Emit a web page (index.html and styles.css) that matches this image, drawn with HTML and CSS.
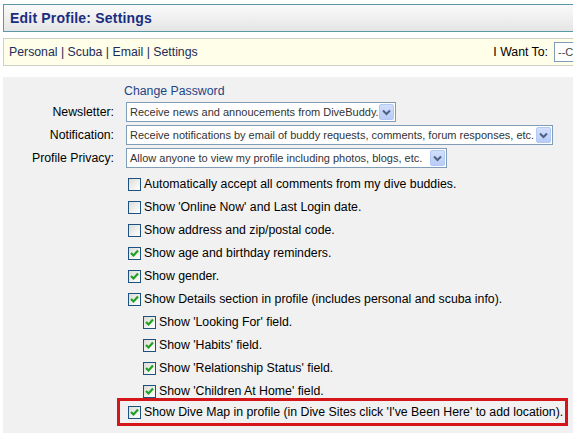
FILE: index.html
```html
<!DOCTYPE html>
<html lang="en">
<head>
  <meta charset="UTF-8" />
  <title>Edit Profile: Settings</title>
  <link rel="stylesheet" href="styles.css">
</head>
<body>

  <div class="page">
    <div class="header">
      <h1>Edit Profile: Settings</h1>
    </div>

    <div class="tabs">
      <div class="tab-links">
        <a href="#">Personal</a> | <a href="#">Scuba</a> | <a href="#">Email</a> | <a href="#">Settings</a>
      </div>
      <div class="want">
        <span>I Want To:</span>
        <div class="select want-select">--Choose--</div>
      </div>
    </div>

    <div class="content">
      <div class="form">
        <span></span>
        <a href="#" class="change">Change Password</a>

        <label class="label">Newsletter:</label>
        <div class="select sel-news">
          <span>Receive news and annoucements from DiveBuddy.</span>
          <span class="arrow"><svg width="9" height="7" viewBox="0 0 9 7"><path d="M1 1.5 L4.5 5 L8 1.5" fill="none" stroke="#4d6185" stroke-width="2"/></svg></span>
        </div>

        <label class="label">Notification:</label>
        <div class="select sel-notify">
          <span>Receive notifications by email of buddy requests, comments, forum responses, etc.</span>
          <span class="arrow"><svg width="9" height="7" viewBox="0 0 9 7"><path d="M1 1.5 L4.5 5 L8 1.5" fill="none" stroke="#4d6185" stroke-width="2"/></svg></span>
        </div>

        <label class="label">Profile Privacy:</label>
        <div class="select sel-privacy">
          <span>Allow anyone to view my profile including photos, blogs, etc.</span>
          <span class="arrow"><svg width="9" height="7" viewBox="0 0 9 7"><path d="M1 1.5 L4.5 5 L8 1.5" fill="none" stroke="#4d6185" stroke-width="2"/></svg></span>
        </div>
      </div>

      <ul class="checks">
        <li class="check"><span class="box"></span>Automatically accept all comments from my dive buddies.</li>
        <li class="check"><span class="box"></span>Show 'Online Now' and Last Login date.</li>
        <li class="check"><span class="box"></span>Show address and zip/postal code.</li>
        <li class="check on"><span class="box"><svg width="11" height="11" viewBox="0 0 11 11"><path d="M2 5 L4.5 7.5 L9 2.5" fill="none" stroke="#21a121" stroke-width="2.2"/></svg></span>Show age and birthday reminders.</li>
        <li class="check on"><span class="box"><svg width="11" height="11" viewBox="0 0 11 11"><path d="M2 5 L4.5 7.5 L9 2.5" fill="none" stroke="#21a121" stroke-width="2.2"/></svg></span>Show gender.</li>
        <li class="check on"><span class="box"><svg width="11" height="11" viewBox="0 0 11 11"><path d="M2 5 L4.5 7.5 L9 2.5" fill="none" stroke="#21a121" stroke-width="2.2"/></svg></span>Show Details section in profile (includes personal and scuba info).</li>
        <li class="check on sub"><span class="box"><svg width="11" height="11" viewBox="0 0 11 11"><path d="M2 5 L4.5 7.5 L9 2.5" fill="none" stroke="#21a121" stroke-width="2.2"/></svg></span>Show 'Looking For' field.</li>
        <li class="check on sub"><span class="box"><svg width="11" height="11" viewBox="0 0 11 11"><path d="M2 5 L4.5 7.5 L9 2.5" fill="none" stroke="#21a121" stroke-width="2.2"/></svg></span>Show 'Habits' field.</li>
        <li class="check on sub"><span class="box"><svg width="11" height="11" viewBox="0 0 11 11"><path d="M2 5 L4.5 7.5 L9 2.5" fill="none" stroke="#21a121" stroke-width="2.2"/></svg></span>Show 'Relationship Status' field.</li>
        <li class="check on sub"><span class="box"><svg width="11" height="11" viewBox="0 0 11 11"><path d="M2 5 L4.5 7.5 L9 2.5" fill="none" stroke="#21a121" stroke-width="2.2"/></svg></span>Show 'Children At Home' field.</li>
        <li class="check on highlight"><span class="box"><svg width="11" height="11" viewBox="0 0 11 11"><path d="M2 5 L4.5 7.5 L9 2.5" fill="none" stroke="#21a121" stroke-width="2.2"/></svg></span>Show Dive Map in profile (in Dive Sites click 'I've Been Here' to add location).</li>
      </ul>
    </div>
  </div>

</body>
</html>
```

FILE: styles.css
```css
body {
  margin: 0;
  font-family: "Liberation Sans", Arial, sans-serif;
  font-size: 12.3px;
  color: #000;
  background: #fff;
  overflow: hidden;
}

.page {
  width: 640px;
  padding-left: 3px;
  box-sizing: border-box;
}

.header {
  margin-top: 4px;
  height: 28px;
  box-sizing: border-box;
  border: 1px solid #5b98a5;
  background: linear-gradient(#fafafa, #e5e5e5);
  display: flex;
  align-items: center;
  padding-left: 6px;
}

h1 {
  margin: 0;
  font-size: 14px;
  font-weight: bold;
  color: #1b2d80;
  letter-spacing: 0.2px;
}

.tabs {
  margin-top: 6px;
  height: 28px;
  box-sizing: border-box;
  border: 1px solid #cfcfc4;
  background: #fefee9;
  display: flex;
  align-items: center;
  padding: 0 5px;
}

.tab-links {
  color: #1d2c5a;
}

.tab-links a {
  color: #1d2c5a;
  text-decoration: none;
}

.want {
  margin-left: auto;
  display: flex;
  align-items: center;
  gap: 6px;
}

.select {
  height: 20px;
  box-sizing: border-box;
  border: 1px solid #7f9db9;
  background: #fff;
  font-size: 11px;
  color: #333;
  display: flex;
  align-items: center;
  padding-left: 3px;
  position: relative;
}

.want-select {
  width: 80px;
  color: #444;
}

.arrow {
  position: absolute;
  right: 1px;
  top: 1px;
  width: 15px;
  height: 16px;
  box-sizing: border-box;
  border: 1px solid #b4c8f4;
  border-radius: 2px;
  background: linear-gradient(#d2defc, #b8ccf7);
  display: flex;
  align-items: center;
  justify-content: center;
}

.content {
  margin-top: 11px;
  background: #f1f1f1;
  padding-top: 5px;
  padding-bottom: 20px;
}

.form {
  display: grid;
  grid-template-columns: 111px auto;
  column-gap: 12px;
  row-gap: 3px;
  justify-items: start;
}

.change {
  margin-left: -2px;
  height: 18px;
  line-height: 18px;
  color: #1d4585;
  text-decoration: none;
  margin-bottom: -1px;
}

.label {
  justify-self: end;
  align-self: center;
}

.sel-news { width: 270px; }
.sel-notify { width: 427px; }
.sel-privacy { width: 321px; }

.checks {
  list-style: none;
  margin: 8px 0 0;
  padding: 0 0 0 125px;
  display: flex;
  flex-direction: column;
  gap: 7px;
}

.check {
  display: flex;
  align-items: center;
  height: 16px;
  white-space: nowrap;
}

.box {
  width: 13px;
  height: 13px;
  box-sizing: border-box;
  border: 1px solid #1c5180;
  background: linear-gradient(135deg, #dcdcd7, #fff);
  margin-right: 3px;
  flex: none;
  display: flex;
  align-items: center;
  justify-content: center;
}

.check.sub {
  padding-left: 15px;
}

.check.highlight {
  margin-top: -8px;
  margin-left: -11px;
  width: 451px;
  height: 28px;
  box-sizing: border-box;
  border: 3px solid #d4161b;
  padding-left: 8px;
}
```
